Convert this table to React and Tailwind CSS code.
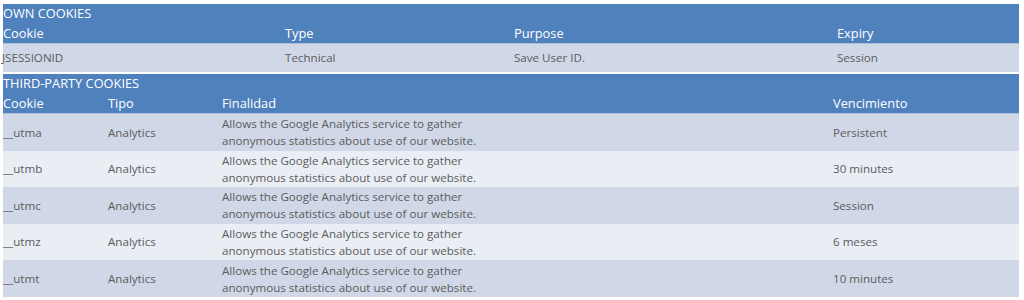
const own = [{ cookie: 'JSESSIONID', type: 'Technical', purpose: 'Save User ID.', expiry: 'Session' }];

const desc = (
  <>
    Allows the Google Analytics service to gather
    <br />
    anonymous statistics about use of our website.
  </>
);

const third = [
  { cookie: '__utma', expiry: 'Persistent' },
  { cookie: '__utmb', expiry: '30 minutes' },
  { cookie: '__utmc', expiry: 'Session' },
  { cookie: '__utmz', expiry: '6 meses' },
  { cookie: '__utmt', expiry: '10 minutes' },
];

export default function App() {
  return (
    <div className="w-[1024px] h-[300px] bg-white pt-[4px] pl-[3px] font-['Open_Sans',sans-serif] overflow-hidden">
      <div className="w-[1016px]">
        {/* own cookies */}
        <div className="bg-[#4f81bd] text-white text-[12.8px]">
          <div className="h-[20px] flex items-center">OWN COOKIES</div>
          <div className="h-[19px] grid grid-cols-[282px_229px_323px_182px] items-center">
            <span>Cookie</span>
            <span>Type</span>
            <span>Purpose</span>
            <span>Expiry</span>
          </div>
        </div>
        <div className="border-t border-[#a9bfdc]">
          {own.map((r) => (
            <div key={r.cookie} className="h-[28px] grid grid-cols-[282px_229px_323px_182px] items-center bg-[#d0d8e8] text-[11.6px] text-[#5c5c5c]">
              <span className="-ml-[1px]">{r.cookie}</span>
              <span>{r.type}</span>
              <span>{r.purpose}</span>
              <span>{r.expiry}</span>
            </div>
          ))}
        </div>

        <div className="h-[2px]" />

        {/* third party */}
        <div className="bg-[#4f81bd] text-white text-[12.8px]">
          <div className="h-[20px] flex items-center">THIRD-PARTY COOKIES</div>
          <div className="h-[19px] grid grid-cols-[105px_114px_611px_186px] items-center">
            <span>Cookie</span>
            <span>Tipo</span>
            <span>Finalidad</span>
            <span>Vencimiento</span>
          </div>
        </div>
        <div className="border-t border-[#a9bfdc]">
          {third.map((r, i) => (
            <div
              key={r.cookie}
              className={`h-[36.6px] grid grid-cols-[105px_114px_611px_186px] items-center text-[11.6px] text-[#5c5c5c] ${i % 2 === 0 ? 'bg-[#d0d8e8]' : 'bg-[#e9edf4]'}`}
            >
              <span>{r.cookie}</span>
              <span>Analytics</span>
              <span className="leading-[17px]">{desc}</span>
              <span>{r.expiry}</span>
            </div>
          ))}
        </div>
      </div>
    </div>
  );
}
